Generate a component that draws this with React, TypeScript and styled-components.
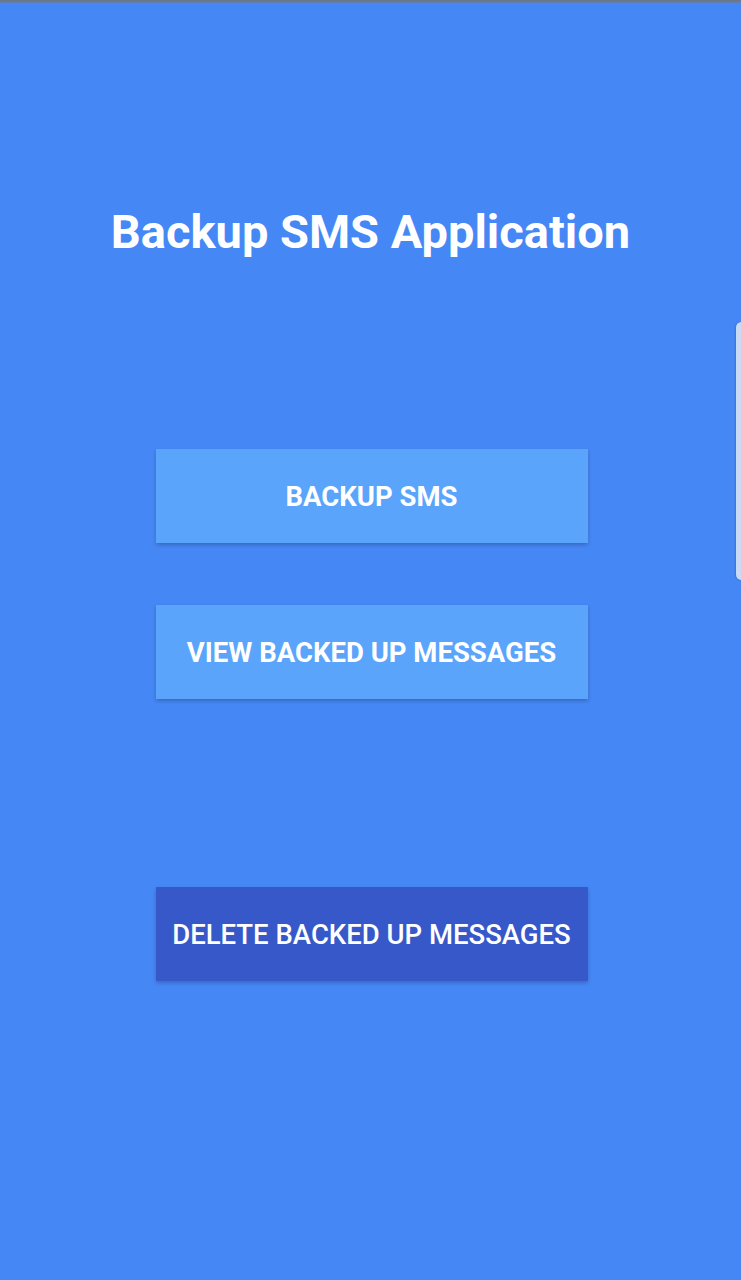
import React from "react";
import styled, { createGlobalStyle } from "styled-components";

const Global = createGlobalStyle`
  html, body { margin: 0; padding: 0; background: #4687f6; }
  body { font-family: Roboto, "Noto Sans", sans-serif; }
`;

const Screen = styled.div`
  position: relative;
  width: 741px;
  height: 1280px;
  background: #4687f6;
  display: flex;
  flex-direction: column;
  align-items: center;
  overflow: hidden;
`;

const StatusEdge = styled.div`
  align-self: stretch;
  height: 3px;
  background: linear-gradient(#6f7580, #5d7fbf);
`;

const Title = styled.h1`
  margin: 197px 0 0;
  font-size: 47px;
  line-height: 64px;
  font-weight: 700;
  color: #ffffff;
`;

const Actions = styled.div`
  margin-top: 185px;
  margin-left: 2px;
  display: flex;
  flex-direction: column;
  gap: 62px;
`;

const Action = styled.button<{ $tone: "light" | "dark"; $gap?: number }>`
  width: 432px;
  height: 94px;
  border: none;
  border-radius: 0;
  margin-top: ${(p) => p.$gap ?? 0}px;
  background: ${(p) => (p.$tone === "light" ? "#5ba4fb" : "#3758c8")};
  color: #ffffff;
  font-family: Roboto, sans-serif;
  font-size: 27.5px;
  font-weight: ${(p) => (p.$tone === "light" ? 700 : 500)};
  letter-spacing: 0;
  padding: 0;
  box-shadow: 0 2px 4px rgba(0, 0, 0, 0.22);
  cursor: pointer;
`;

const EdgeHandle = styled.div`
  position: absolute;
  right: -6px;
  top: 322px;
  width: 11px;
  height: 258px;
  border-radius: 6px;
  background: #c9daf7;
  box-shadow: -1px 0 2px rgba(0, 0, 0, 0.15);
`;

export default function App() {
  return (
    <Screen>
      <Global />
      <StatusEdge />
      <Title>Backup SMS Application</Title>
      <Actions>
        <Action $tone="light">BACKUP SMS</Action>
        <Action $tone="light">VIEW BACKED UP MESSAGES</Action>
        <Action $tone="dark" $gap={126}>DELETE BACKED UP MESSAGES</Action>
      </Actions>
      <EdgeHandle />
    </Screen>
  );
}
